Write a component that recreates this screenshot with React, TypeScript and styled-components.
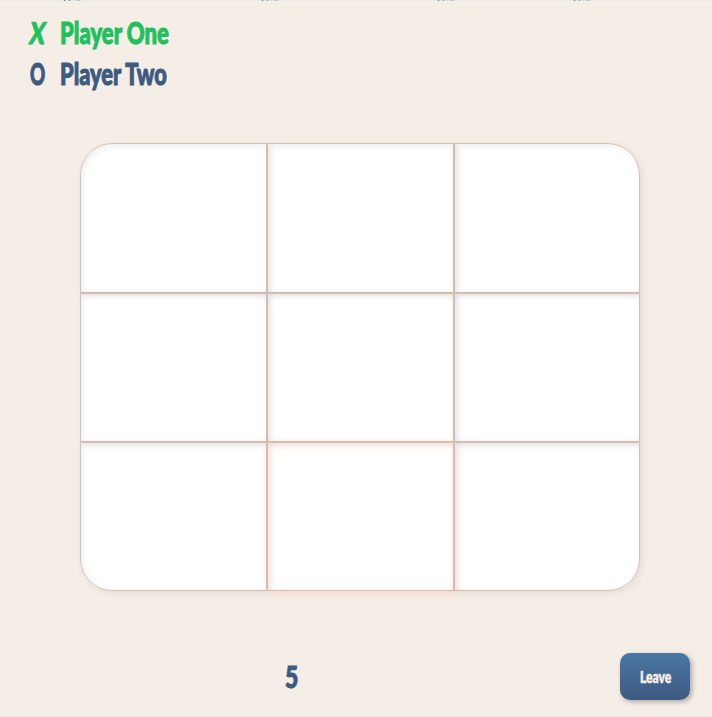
import React, { useLayoutEffect, useRef } from 'react';
import styled, { createGlobalStyle } from 'styled-components';

const GlobalStyle = createGlobalStyle`
  * { box-sizing: border-box; }
  body {
    margin: 0;
    background: #f5eee6;
    overflow: hidden;
    font-family: Lato, "Liberation Sans", sans-serif;
    font-weight: 900;
  }
`;

const Page = styled.main`
  display: flex;
  flex-direction: column;
  width: 712px;
  height: 717px;
`;

const Ruler = styled.div`
  flex: none;
  width: 100%;
  height: 1px;
  background: #e9eaec;
`;

const Ticks = styled.svg`
  display: block;
`;

const Players = styled.header`
  display: flex;
  flex-direction: column;
  padding: 11px 0 0 30px;
  height: 142px;
`;

const Player = styled.div<{ $active?: boolean }>`
  display: grid;
  grid-template-columns: 30px 120px;
  height: 41px;
  line-height: 41px;
  color: ${p => (p.$active ? '#20c05c' : '#3d5a80')};
`;

const Lettering = styled.span<{ $size: number }>`
  display: block;
  width: max-content;
  font-size: ${p => p.$size}px;
  white-space: nowrap;
  transform-origin: left center;
  -webkit-text-stroke: ${p => p.$size / 28}px currentColor;
`;

const Board = styled.section`
  display: grid;
  grid-template-columns: 187px 187px 186px;
  grid-template-rows: 150px 149px 149px;
  width: 560px;
  height: 448px;
  margin-left: 80px;
  background: #fff;
  border-radius: 32px;
`;

const Cell = styled.div<{ $hot?: boolean; $corner?: string }>`
  border: 1px solid #d6bfb2;
  border-radius: ${p => p.$corner ?? '0'};
  box-shadow: ${p =>
    p.$hot
      ? '2px 2px 8px rgba(240, 110, 100, 0.2), inset 2px 2px 8px rgba(240, 110, 100, 0.17)'
      : '2px 2px 6px rgba(60, 70, 60, 0.1), inset 2px 2px 7px rgba(0, 0, 0, 0.07)'};
`;

const Footer = styled.footer`
  display: grid;
  grid-template-columns: 334px 70px;
  height: 126px;
  padding: 62px 0 0 286px;
`;

const Timer = styled.div`
  height: 47px;
  margin-left: -1px;
  line-height: 47px;
  color: #3d5a80;
`;

const LeaveButton = styled.button`
  width: 70px;
  height: 47px;
  padding: 0 0 0 20px;
  border: 0;
  border-radius: 10px;
  color: #f5eee6;
  font: inherit;
  line-height: 48px;
  text-align: left;
  background: linear-gradient(#4b76a5, #3d5a80);
  box-shadow: 2px 2px 5px rgba(0, 0, 0, 0.3);
`;

interface FitProps {
  text: string;
  width: number;
  size: number;
  slant?: number;
}

function Fit({ text, width, size, slant = 0 }: FitProps) {
  const ref = useRef<HTMLSpanElement>(null);
  useLayoutEffect(() => {
    const el = ref.current;
    if (el) el.style.transform = `skewX(${-slant}deg) scaleX(${width / el.offsetWidth})`;
  }, [text, width, slant]);
  return <Lettering ref={ref} $size={size}>{text}</Lettering>;
}

const corners: Record<number, string> = {
  0: '32px 0 0 0',
  2: '0 32px 0 0',
  6: '0 0 0 32px',
  8: '0 0 32px 0',
};

export default function App() {
  return (
    <>
      <GlobalStyle />
      <Page>
        <Ruler>
          <Ticks width="712" height="1">
            {[64, 262, 438, 574].map(x => (
              <g key={x}>
                <rect x={x - 1} width="18" height="1" fill="#d8e2ef" />
                <rect x={x} width="1" height="1" fill="#68717c" />
                <rect x={x + 5} width="1" height="1" fill="#78818d" />
                <rect x={x + 13} width="1" height="1" fill="#9ba6b4" />
                <rect x={x + 15} width="1" height="1" fill="#adb4be" />
              </g>
            ))}
          </Ticks>
        </Ruler>
        <Players>
          <Player $active>
            <Fit text="X" width={15} size={30} slant={8} />
            <Fit text="Player One" width={109} size={30} />
          </Player>
          <Player>
            <Fit text="O" width={15} size={30} />
            <Fit text="Player Two" width={107} size={30} />
          </Player>
        </Players>
        <Board>
          {Array.from({ length: 9 }, (_, i) => (
            <Cell key={i} $hot={i === 7} $corner={corners[i]} />
          ))}
        </Board>
        <Footer>
          <Timer><Fit text="5" width={13} size={30} /></Timer>
          <LeaveButton><Fit text="Leave" width={31} size={16} /></LeaveButton>
        </Footer>
      </Page>
    </>
  );
}
